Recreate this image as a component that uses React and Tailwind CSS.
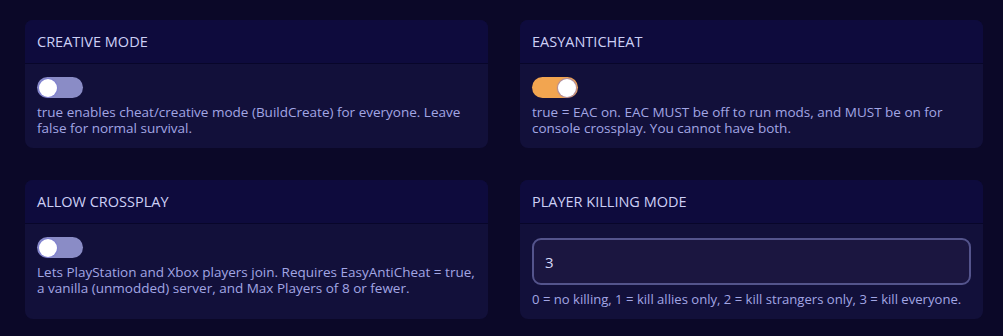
import { useState } from "react";

function Toggle({ on, onChange }) {
  return (
    <button
      type="button"
      onClick={onChange}
      className={
        "relative flex h-[21px] w-[46px] items-center rounded-full px-[2px] " +
        (on ? "justify-end bg-[#f2a550]" : "justify-start bg-[#8a8cc6]")
      }
    >
      <span className="block h-[18px] w-[18px] rounded-full bg-white shadow-[0_0_1px_1px_rgba(120,120,220,0.6)]" />
    </button>
  );
}

function SettingCard({ title, children, help, helpSize = "text-[13.5px]" }) {
  return (
    <div className="overflow-hidden rounded-[8px] bg-[#12103a]">
      <div className="border-b border-[#08062a] bg-[#0e0b3d] px-3 pb-[13px] pt-[14px] text-[14.5px] leading-4 text-[#cdd0f6]">
        {title}
      </div>
      <div className="px-3 pb-3 pt-[13px]">
        {children}
        <p className={"mt-[6px] leading-4 text-[#a2a6e4] " + helpSize}>{help}</p>
      </div>
    </div>
  );
}

export default function App() {
  const [creative, setCreative] = useState(false);
  const [eac, setEac] = useState(true);
  const [crossplay, setCrossplay] = useState(false);
  const [pk, setPk] = useState("3");

  return (
    <div
      className="min-h-[336px] bg-[#0b0828] pb-5 pl-[25px] pr-[20px] pt-5"
      style={{ fontFamily: '"Open Sans", "Liberation Sans", sans-serif' }}
    >
      <div className="grid grid-cols-2 gap-8">
        <SettingCard
          title="CREATIVE MODE"
          help="true enables cheat/creative mode (BuildCreate) for everyone. Leave false for normal survival."
        >
          <Toggle on={creative} onChange={() => setCreative(!creative)} />
        </SettingCard>
        <SettingCard
          title="EASYANTICHEAT"
          help="true = EAC on. EAC MUST be off to run mods, and MUST be on for console crossplay. You cannot have both."
        >
          <Toggle on={eac} onChange={() => setEac(!eac)} />
        </SettingCard>
        <SettingCard
          title="ALLOW CROSSPLAY"
          help="Lets PlayStation and Xbox players join. Requires EasyAntiCheat = true, a vanilla (unmodded) server, and Max Players of 8 or fewer."
        >
          <Toggle on={crossplay} onChange={() => setCrossplay(!crossplay)} />
        </SettingCard>
        <SettingCard
          title="PLAYER KILLING MODE"
          helpSize="text-[13.1px] whitespace-nowrap"
          help="0 = no killing, 1 = kill allies only, 2 = kill strangers only, 3 = kill everyone."
        >
          <input
            value={pk}
            onChange={(e) => setPk(e.target.value)}
            className="mt-[1px] block h-[47px] w-full rounded-[9px] border-2 border-[#54548c] bg-[#1b1640] px-[11px] text-[15px] text-[#d6d8fa] outline-none"
          />
        </SettingCard>
      </div>
    </div>
  );
}
